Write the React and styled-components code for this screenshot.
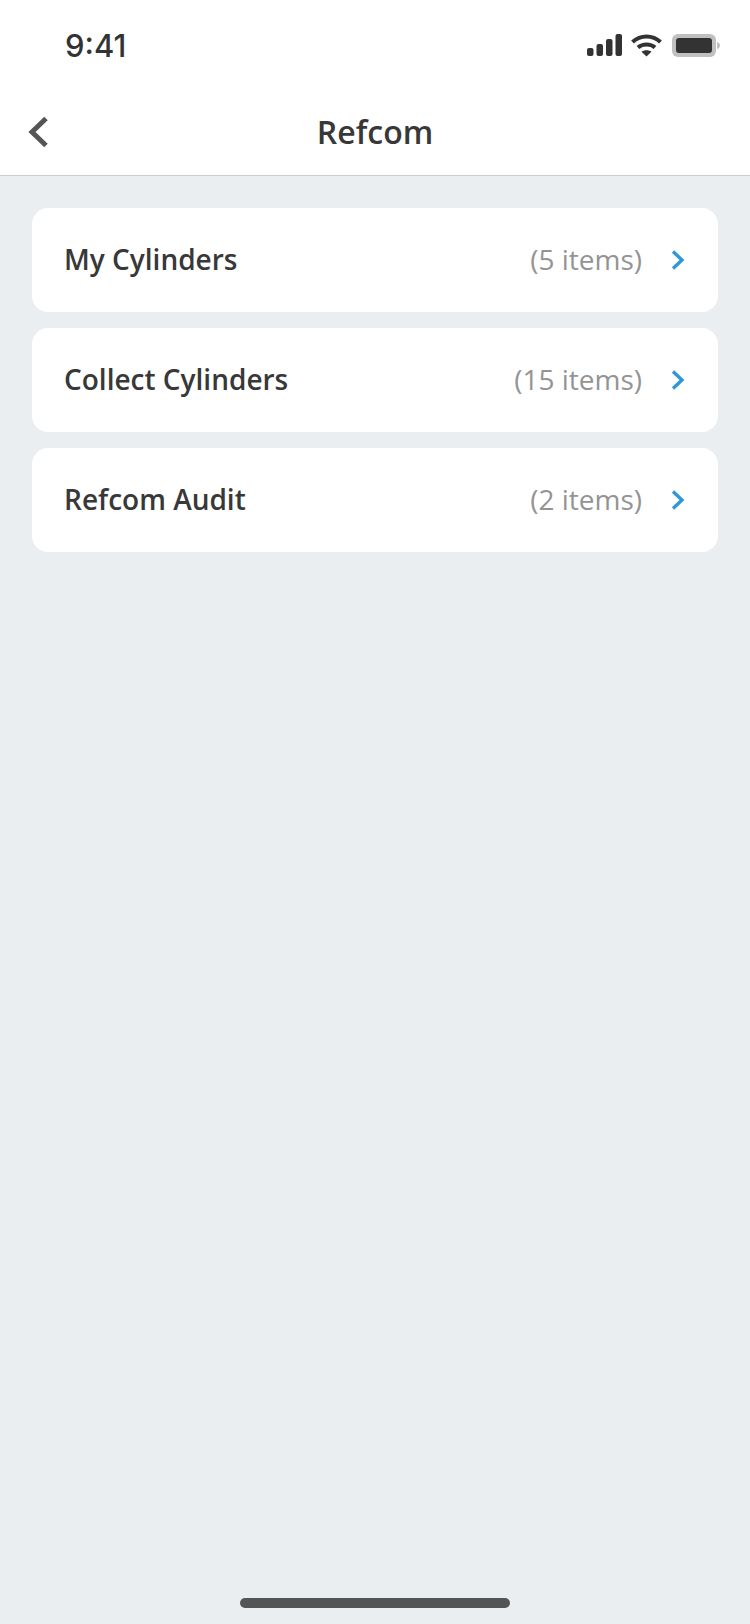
import React from "react";
import styled, { createGlobalStyle } from "styled-components";

const GlobalStyle = createGlobalStyle`
  html, body {
    margin: 0;
    padding: 0;
    background: #eaeef1;
  }
  * {
    box-sizing: border-box;
  }
`;

const Screen = styled.div`
  width: 750px;
  height: 1624px;
  display: flex;
  flex-direction: column;
  background: #eaeef1;
  font-family: "Open Sans", "Liberation Sans", sans-serif;
  color: #383838;
`;

const StatusBar = styled.div`
  height: 88px;
  flex: none;
  display: flex;
  align-items: center;
  justify-content: space-between;
  padding: 2px 30px 0 65px;
  background: #fff;
`;

const Time = styled.span`
  font-family: Inter, "Liberation Sans", sans-serif;
  font-size: 31px;
  font-weight: 500;
  color: #333;
`;

const StatusIcons = styled.div`
  display: flex;
  align-items: center;
  gap: 9px;
`;

const NavBar = styled.header`
  height: 88px;
  flex: none;
  display: flex;
  align-items: center;
  justify-content: center;
  position: relative;
  background: #fff;
  border-bottom: 1px solid #c9cbcd;
`;

const Title = styled.h1`
  margin: 0;
  font-size: 32px;
  font-weight: 600;
  color: #383838;
`;

const BackButton = styled.button`
  position: absolute;
  left: 27px;
  top: 28px;
  padding: 0;
  border: 0;
  background: none;
  display: flex;
`;

const List = styled.main`
  flex: 1;
  display: flex;
  flex-direction: column;
  gap: 16px;
  padding: 32px 32px 0;
`;

const Row = styled.div`
  height: 104px;
  display: flex;
  align-items: center;
  padding: 0 33px 0 32px;
  background: #fff;
  border-radius: 16px;
`;

const RowLabel = styled.span`
  flex: 1;
  margin-bottom: 2px;
  font-size: 28px;
  font-weight: 600;
  color: #383838;
`;

const RowCount = styled.span`
  margin: 0 29px 2px 0;
  font-size: 28px;
  color: #949494;
`;

const HomeBar = styled.div`
  flex: none;
  align-self: center;
  width: 270px;
  height: 10px;
  margin-bottom: 16px;
  border-radius: 5px;
  background: #545454;
`;

const rows = [
  { label: "My Cylinders", count: "(5 items)" },
  { label: "Collect Cylinders", count: "(15 items)" },
  { label: "Refcom Audit", count: "(2 items)" },
];

function SignalIcon() {
  return (
    <svg width="35" height="22" viewBox="0 0 35 22" fill="#333">
      <rect x="0" y="14" width="6.5" height="8" rx="2" />
      <rect x="9.5" y="10" width="6.5" height="12" rx="2" />
      <rect x="19" y="5" width="6.5" height="17" rx="2" />
      <rect x="28.5" y="0" width="6.5" height="22" rx="2" />
    </svg>
  );
}

function WifiIcon() {
  return (
    <svg width="31" height="23" viewBox="0 0 31 23" fill="none" stroke="#333" strokeWidth="4">
      <path d="M1.5 8 C9.5 0.5 21.5 0.5 29.5 8" />
      <path d="M7 13.5 C11.5 9.5 19.5 9.5 24 13.5" />
      <path d="M15.5 22.5 L10.5 17.8 C13 15.8 18 15.8 20.5 17.8 Z" fill="#333" stroke="none" />
    </svg>
  );
}

function BatteryIcon() {
  return (
    <svg width="49" height="23" viewBox="0 0 49 23">
      <rect x="1" y="0" width="44" height="23" rx="6" fill="#c0c0c0" />
      <rect x="5" y="4" width="36" height="15" rx="3" fill="#333" />
      <path d="M46 8 C48 8.5 49 10 49 11.5 C49 13 48 14.5 46 15 Z" fill="#c0c0c0" />
    </svg>
  );
}

function BackIcon() {
  return (
    <svg width="22" height="32" viewBox="0 0 22 32" fill="none" stroke="#555" strokeWidth="5">
      <path d="M19 2.5 L5 16 L19 29.5" />
    </svg>
  );
}

function ChevronIcon() {
  return (
    <svg width="14" height="20" viewBox="0 0 14 20" fill="none" stroke="#2f96dd" strokeWidth="3.4">
      <path d="M2 1.5 L11 10 L2 18.5" />
    </svg>
  );
}

export default function App() {
  return (
    <Screen>
      <GlobalStyle />
      <StatusBar>
        <Time>9:41</Time>
        <StatusIcons>
          <SignalIcon />
          <WifiIcon />
          <BatteryIcon />
        </StatusIcons>
      </StatusBar>
      <NavBar>
        <BackButton>
          <BackIcon />
        </BackButton>
        <Title>Refcom</Title>
      </NavBar>
      <List>
        {rows.map((row) => (
          <Row key={row.label}>
            <RowLabel>{row.label}</RowLabel>
            <RowCount>{row.count}</RowCount>
            <ChevronIcon />
          </Row>
        ))}
      </List>
      <HomeBar />
    </Screen>
  );
}
